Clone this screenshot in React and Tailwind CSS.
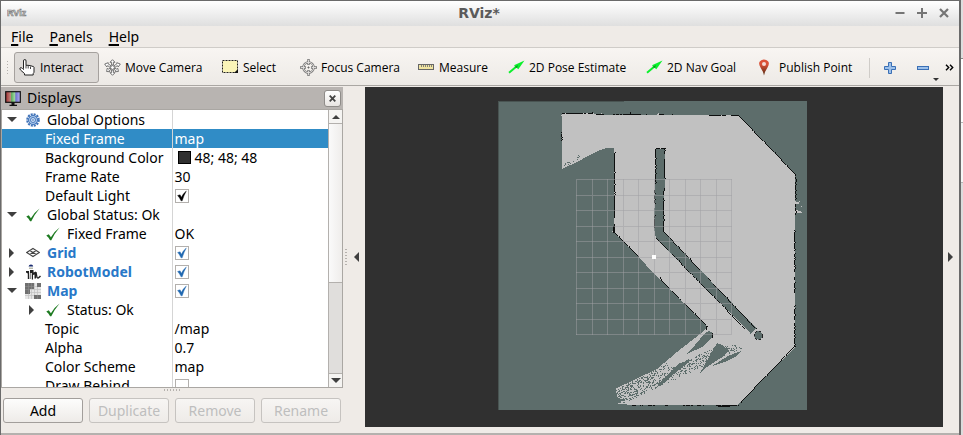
import React from 'react';

/* ---------- small drawings ---------- */

const HandIcon = () => (
  <svg width="17" height="17" viewBox="0 0 17 17" className="shrink-0">
    <path
      d="M4.500 9.500V2q0-1.500 1.300-1.500T7 2v4.500q1-.8 2 0 1-.6 2 .3 1-.5 2 .5 1.500-.3 2 .8v5.200l-.8 1.300v1.400H5.500V14.500L1.500 11q-1-1.300-.5-2 1-1 2.500.5l1 1z"
      fill="#fff" stroke="#222" strokeWidth="1"
    />
    <path d="M7 6.500v3M9.200 7v2.500M11.500 7.500v2.500" stroke="#444" strokeWidth="1" />
  </svg>
);

const MoveIcon = () => (
  <svg width="17" height="17" viewBox="0 0 17 17" className="shrink-0" fill="#fff" stroke="#666" strokeWidth="0.900" strokeLinejoin="round">
    <path d="M8.500 .7L11 3.300H9.400V6H7.600V3.300H6z" />
    <path d="M8.500 16.300L6 13.700h1.600V11h1.800v2.700H11z" />
    <path d="M.7 5L4.200 3.700v1.200L7.300 7 6.200 8.400 3.600 6.600 2.800 8z" />
    <path d="M16.300 5l-3.500-1.300v1.200L9.700 7l1.100 1.400 2.600-1.800.8 1.400z" />
    <path d="M2.600 12.500l.6-3.200 1 .9 2-1.200.9 1.300-2 1.300.7 1.100z" />
    <path d="M14.400 12.500l-.6-3.200-1 .9-2-1.200-.9 1.300 2 1.300-.7 1.100z" />
    <circle cx="8.500" cy="8.500" r="1.900" />
  </svg>
);

const SelectIcon = () => (
  <svg width="17" height="17" viewBox="0 0 17 17" className="shrink-0">
    <rect x="0.500" y="1.500" width="15" height="12" fill="#fbf5b8" stroke="#222" strokeDasharray="2 1" />
    <path d="M16 10v4h-4z" fill="#111" />
  </svg>
);

const FocusIcon = () => (
  <svg width="17" height="17" viewBox="0 0 17 17" className="shrink-0" fill="none" stroke="#777">
    <circle cx="8.500" cy="8.500" r="5.200" strokeWidth="2.200" />
    <path d="M8.500 0v6M8.500 11v6M0 8.500h6M11 8.500h6" strokeWidth="2.400" />
    <circle cx="8.500" cy="8.500" r="5.200" stroke="#e4e2e0" strokeWidth="0.900" />
    <path d="M8.500 .8v4.500M8.500 11.700v4.500M.8 8.500h4.500M11.700 8.500h4.500" stroke="#e4e2e0" strokeWidth="0.900" />
    <path d="M7.500 8.500h2M8.500 7.500v2" stroke="#666" />
  </svg>
);

const RulerIcon = () => (
  <svg width="17" height="17" viewBox="0 0 17 17" className="shrink-0">
    <rect x="0.500" y="5.500" width="15" height="5" fill="#f0e4a0" stroke="#666" />
    <path d="M3.500 6v2M5.500 6v2M7.500 6v2M9.500 6v2M11.500 6v2M13.500 6v2" stroke="#777" strokeWidth="0.900" />
  </svg>
);

const ArrowIcon = () => (
  <svg width="17" height="17" viewBox="0 0 17 17" className="shrink-0">
    <path d="M1 13.700L9 7" stroke="#0cf02c" strokeWidth="2" />
    <path d="M16.500 1.500L6 6.300 10.300 10.300z" fill="#0cf02c" />
    <path d="M6.500 8L10 6l-1 3z" fill="#0a9a22" />
  </svg>
);

const PinIcon = () => (
  <svg width="17" height="17" viewBox="0 0 17 17" className="shrink-0">
    <defs>
      <linearGradient id="pin" x1="0" y1="0" x2="0" y2="1">
        <stop offset="0.300" stopColor="#db5238" />
        <stop offset="1" stopColor="#50280f" />
      </linearGradient>
    </defs>
    <path d="M6 16.500Q5.500 13 2.500 8.500 0 4.500 2 2.200 3.500 .5 6 .5t4 1.700q2 2.300-.5 6.300Q6.500 13 6 16.500z" fill="url(#pin)" />
    <circle cx="6" cy="5" r="2" fill="#f4dcd6" />
  </svg>
);

const PlusIcon = () => (
  <svg width="14" height="14" viewBox="0 0 14 14">
    <path d="M5.500 1.500h3v4h4v3h-4v4h-3v-4h-4v-3h4z" fill="#9cc0ea" stroke="#3a6fb5" />
  </svg>
);

const MinusIcon = () => (
  <svg width="14" height="14" viewBox="0 0 14 14">
    <rect x="1.500" y="5.500" width="11" height="3" fill="#9cc0ea" stroke="#3a6fb5" />
  </svg>
);

const MonitorIcon = () => (
  <svg width="16" height="17" viewBox="0 0 16 17" className="shrink-0">
    <defs>
      <linearGradient id="screen">
        <stop offset="0.050" stopColor="#a83c3c" />
        <stop offset="0.350" stopColor="#c08a80" />
        <stop offset="0.400" stopColor="#5fae62" />
        <stop offset="0.600" stopColor="#9ad69a" />
        <stop offset="0.700" stopColor="#7272d0" />
        <stop offset="1" stopColor="#b8b8f4" />
      </linearGradient>
    </defs>
    <rect x="0.700" y="1.700" width="14.600" height="10.600" fill="url(#screen)" stroke="#111" strokeWidth="1.200" />
    <path d="M6.500 12.500h3v2.200H12V16H4.500v-1.300h2z" fill="#111" />
  </svg>
);

const GearIcon = () => (
  <svg width="14" height="14" viewBox="0 0 14 14" className="shrink-0">
    <circle cx="7" cy="7" r="5.700" fill="none" stroke="#3f72b8" strokeWidth="2.200" strokeDasharray="2 0.980" />
    <circle cx="7" cy="7" r="4.500" fill="#a9c7ea" stroke="#3f72b8" />
    <circle cx="7" cy="7" r="2.500" fill="#cfe0f4" stroke="#3f72b8" strokeWidth="0.900" />
    <circle cx="7" cy="7" r="0.800" fill="#3a6cb0" />
  </svg>
);

const OkIcon = () => (
  <svg width="14" height="14" viewBox="0 0 14 14" className="shrink-0">
    <path d="M.3 8.500l2.500-1.300L4.900 10.300Q8.500 4 13.600 .4 8.300 6.500 5.300 13.300H4.100Q2.500 10 .3 8.500z" fill="#1d7a20" />
  </svg>
);

const GridIcon = () => (
  <svg width="14" height="14" viewBox="0 0 14 14" className="shrink-0" fill="none" stroke="#444" strokeWidth="1.100">
    <path d="M7 2.500L13.300 6.500 7 10.500.7 6.500zM3.800 4.500l6.400 4M10.200 4.500l-6.400 4" />
  </svg>
);

const RobotIcon = () => (
  <svg width="16" height="16" viewBox="0 0 16 16" className="shrink-0">
    <path d="M3.500 2.500Q4 .5 6 .5t2.200 2z" fill="#1a2c70" />
    <path d="M4 3.500h4v1.500H4z" fill="#b9bcae" />
    <path d="M1 7h3v8H2.800V9.500L1 8.500zM5 6h3.500v2.500L11 7.500v7H9.500v-4L8 11v4.500H6.800V9H5.500v6H4.700z" fill="#222" />
    <path d="M11 8l1 5.500q1 1.500 3.500-1.500" fill="none" stroke="#222" strokeWidth="1.300" />
  </svg>
);

const MapIcon = () => (
  <svg width="16" height="16" viewBox="0 0 16 16" className="shrink-0">
    <rect width="16" height="16" fill="#e6e6e6" />
    <path d="M3.500 0v16M6.500 0v16M9.500 0v16M12.500 0v16M0 3.500h16M0 6.500h16M0 9.500h16M0 12.500h16" stroke="#c0c0c0" strokeWidth="0.700" />
    <path d="M0 0h9v6H5v5H0zM12 0h4v4h-4zM9 12h7v4H9z" fill="#707070" />
    <path d="M3.500 0v11M6.500 0v6M0 3.500h9M0 6.500h5M12.500 12v4" stroke="#8e8e8e" strokeWidth="0.600" />
  </svg>
);

const Triangle = ({ dir }) => {
  const d = { down: 'M0 2h10L5 7z', right: 'M2 0v10l5-5z', left: 'M8 0v10L3 5z', up: 'M1 7h8L5 3z' }[dir];
  return (
    <svg width="10" height="10" viewBox="0 0 10 10" className="shrink-0">
      <path d={d} fill="#3f3f3f" />
    </svg>
  );
};

/* ---------- toolbar ---------- */

const tools = [
  { label: 'Interact', icon: <HandIcon />, width: 'w-[85px]', active: true },
  { label: 'Move Camera', icon: <MoveIcon />, width: 'w-[118px]' },
  { label: 'Select', icon: <SelectIcon />, width: 'w-[78px]' },
  { label: 'Focus Camera', icon: <FocusIcon />, width: 'w-[118px]' },
  { label: 'Measure', icon: <RulerIcon />, width: 'w-[90px]' },
  { label: '2D Pose Estimate', icon: <ArrowIcon />, width: 'w-[138px]' },
  { label: '2D Nav Goal', icon: <ArrowIcon />, width: 'w-[112px]' },
  { label: 'Publish Point', icon: <PinIcon />, width: 'w-[112px]' },
];

function Toolbar() {
  return (
    <div className="flex h-[39px] shrink-0 items-center overflow-hidden border-t border-b border-t-[#cfccc8] border-b-[#aaa7a3] bg-linear-to-b from-[#f8f5f2] to-[#edeae6] pt-[2px] pl-[5px]">
      <div className="mr-1 h-4 w-1 shrink-0 bg-[radial-gradient(#b5b1ad_1px,transparent_1px)] bg-[size:3px_3px]" />
      {tools.map((t) => (
        <button
          key={t.label}
          type="button"
          className={`${t.width} ${t.active ? 'border-[#a5a19e] bg-[#dddad7]' : 'border-transparent'} flex h-[31px] shrink-0 items-center gap-1 rounded-[3px] border pl-1 font-['Open_Sans',sans-serif] text-xs whitespace-nowrap text-black`}
        >
          {t.icon}
          {t.label}
        </button>
      ))}
      <div className="mr-2 ml-1 h-5 w-px shrink-0 bg-[#cfccc8]" />
      <button type="button" aria-label="Add tool" className="flex h-7 w-6 shrink-0 items-center justify-center">
        <PlusIcon />
      </button>
      <button type="button" aria-label="Remove tool" className="relative ml-[9px] flex h-7 w-6 shrink-0 items-center justify-center">
        <MinusIcon />
        <svg width="6" height="3" viewBox="0 0 6 3" className="absolute -right-1 bottom-px">
          <path d="M0 0h6L3 3z" fill="#333" />
        </svg>
      </button>
      <button type="button" aria-label="More tools" className="ml-auto flex h-7 w-5 shrink-0 items-center justify-center">
        <svg width="9" height="7" viewBox="0 0 9 7" fill="none" stroke="#000" strokeWidth="1.400">
          <path d="M1 .8l2.700 2.700L1 6.200M5 .8l2.700 2.700L5 6.200" />
        </svg>
      </button>
    </div>
  );
}

/* ---------- displays panel ---------- */

const rows = [
  { name: 'Global Options', arrow: 'down', icon: <GearIcon /> },
  { name: 'Fixed Frame', value: 'map', selected: true },
  { name: 'Background Color', value: '48; 48; 48', swatch: true },
  { name: 'Frame Rate', value: '30' },
  { name: 'Default Light', check: 'black' },
  { name: 'Global Status: Ok', arrow: 'down', icon: <OkIcon /> },
  { name: 'Fixed Frame', value: 'OK', nested: true, icon: <OkIcon /> },
  { name: 'Grid', arrow: 'right', icon: <GridIcon />, check: 'blue', bold: true },
  { name: 'RobotModel', arrow: 'right', icon: <RobotIcon />, check: 'blue', bold: true },
  { name: 'Map', arrow: 'down', icon: <MapIcon />, check: 'blue', bold: true },
  { name: 'Status: Ok', arrow: 'right', nested: true, icon: <OkIcon /> },
  { name: 'Topic', value: '/map' },
  { name: 'Alpha', value: '0.7' },
  { name: 'Color Scheme', value: 'map' },
  { name: 'Draw Behind', check: 'none' },
];

function Check({ kind, label }) {
  return (
    <span className="relative block size-[14px]">
      <input
        type="checkbox"
        aria-label={label}
        defaultChecked={kind !== 'none'}
        className="peer block size-[14px] appearance-none border border-[#b3b0ad] bg-white"
      />
      <svg
        viewBox="0 0 14 14"
        className={`${kind === 'blue' ? 'text-[#2068b0]' : 'text-black'} pointer-events-none absolute inset-0 hidden size-[14px] peer-checked:block`}
      >
        <path d="M2.600 6.500l2.500-.7 1.200 2.500Q8.300 4.300 11.300 2 8.800 6.500 7.200 11.800H6Q4.600 8.500 2.600 6.500z" fill="currentColor" stroke="currentColor" strokeWidth="0.400" />
      </svg>
    </span>
  );
}

function Row({ row }) {
  const plain = !row.icon;
  return (
    <tr className={row.selected ? 'bg-[#308cc6] text-white' : ''}>
      <td className="h-[19px] border-r border-[#d5d5d5] p-0">
        <div className={`${row.nested ? 'pl-[25px]' : 'pl-[5px]'} flex h-[19px] items-center whitespace-nowrap`}>
          {plain ? (
            <span className="w-[38px]" />
          ) : (
            <>
              <span className="flex w-4 shrink-0 items-center">{row.arrow && <Triangle dir={row.arrow} />}</span>
              <span className="mr-1 flex w-5 shrink-0 items-center justify-center">{row.icon}</span>
            </>
          )}
          <span className={row.bold ? 'font-bold text-[#2878c8]' : ''}>{row.name}</span>
        </div>
      </td>
      <td className="p-0 pl-[2px]">
        <div className="flex h-[19px] items-center">
          {row.swatch && <span className="mr-1 ml-[3px] size-[13px] border border-black bg-[#303030]" />}
          {row.check && <Check kind={row.check} label={row.name} />}
          {row.value}
        </div>
      </td>
    </tr>
  );
}

const actions = [
  { label: 'Add' },
  { label: 'Duplicate', disabled: true },
  { label: 'Remove', disabled: true },
  { label: 'Rename', disabled: true },
];

function DisplaysPanel() {
  return (
    <section className="flex w-[342px] shrink-0 flex-col text-sm">
      <header className="flex h-[22px] shrink-0 items-center bg-[#b8b4b1] pr-[2px] pl-1">
        <MonitorIcon />
        <h2 className="ml-[6px] flex-1">Displays</h2>
        <button
          type="button"
          aria-label="Close"
          className="flex size-[17px] items-center justify-center rounded-[3px] border border-[#8f8c89] bg-linear-to-b from-white to-[#e8e5e2]"
        >
          <svg width="7" height="7" viewBox="0 0 7 7" stroke="#444" strokeWidth="1.800">
            <path d="M.7 .7l5.600 5.600M6.300 .7L.7 6.300" />
          </svg>
        </button>
      </header>
      <div className="flex min-h-0 flex-1 overflow-hidden border border-[#aaa7a3] bg-white">
        <div className="min-w-0 flex-1 overflow-hidden">
          <table className="w-full table-fixed border-collapse leading-[19px]">
            <colgroup>
              <col className="w-[170px]" />
              <col />
            </colgroup>
            <tbody>
              {rows.map((r, i) => (
                <Row key={i} row={r} />
              ))}
            </tbody>
          </table>
        </div>
        <div className="flex w-[14px] shrink-0 flex-col border-l border-[#b3b0ad] bg-[#e0dedc]">
          <div className="flex h-[14px] shrink-0 items-center justify-center border-b border-[#b3b0ad] bg-[#f5f4f2]">
            <Triangle dir="up" />
          </div>
          <div className="basis-[159px] border-b border-[#b3b0ad] bg-linear-to-r from-[#fafafa] to-[#efedeb]" />
          <div className="flex-1" />
          <div className="flex h-[14px] shrink-0 items-center justify-center border-t border-[#b3b0ad] bg-[#f5f4f2]">
            <Triangle dir="down" />
          </div>
        </div>
      </div>
      <div className="flex h-[10px] shrink-0 justify-center pt-px">
        <div className="h-[2px] w-4 bg-[repeating-linear-gradient(90deg,#b5b1ad_0_1px,transparent_1px_3px)]" />
      </div>
      <div className="grid shrink-0 grid-cols-4 gap-[6px] pr-[2px] pb-[10px] pl-[2px]">
        {actions.map((a) => (
          <button
            key={a.label}
            type="button"
            disabled={a.disabled}
            className="h-[25px] rounded-[3px] border border-[#a29e9b] bg-linear-to-b from-[#fdfdfc] to-[#eeebe8] leading-5 text-black disabled:border-[#c6c3c0] disabled:from-[#f7f5f3] disabled:text-[#bebebe]"
          >
            {a.label}
          </button>
        ))}
      </div>
    </section>
  );
}

/* ---------- occupancy map ---------- */

function makeRandom(seed) {
  let s = seed;
  return () => {
    s = (s * 1664525 + 1013904223) % 4294967296;
    return s / 4294967296;
  };
}

function upperEdge(x) {
  if (x < 657) return 389 - ((x - 615) * 20) / 42;
  if (x < 677) return 369 - ((x - 657) * 17) / 20;
  return 352 - ((x - 677) * 21) / 27;
}

/* unknown cells scattered over the fan of sparse laser hits */
function scatter() {
  const rnd = makeRandom(11);
  let d = '';
  for (let x = 614; x < 742; x++) {
    for (let y = 345; y < 405; y++) {
      const r = rnd();
      const low = 404 - (x - 622) * 0.47;
      if (y < upperEdge(x) || y > low) continue;
      const depth = (low - y) / 14;
      const dens = x < 640 ? 0.46 : x < 662 ? 0.34 : x < 700 ? 0.2 : 0.18;
      const near = x > 668 ? (y > low - 14 ? 1.3 : 0) : Math.min(1, 0.5 + depth);
      if (r < dens * near) d += `M${x} ${y}h1v1h-1z`;
    }
  }
  for (let i = 0; i < 14; i++) {
    const x = Math.floor(rnd() * 18);
    d += `M${563 + x} ${166 - Math.floor(x / 2) - Math.floor(rnd() * 5)}h1v1h-1z`;
  }
  return d;
}

/* occupied cells left along a wall, with gaps where the scan missed */
function wall(x1, y1, x2, y2, seed, fill) {
  const rnd = makeRandom(seed);
  const n = Math.round(Math.max(Math.abs(x2 - x1), Math.abs(y2 - y1)));
  let d = '';
  let on = true;
  for (let i = 0; i <= n; i++) {
    if (rnd() < 0.3) on = rnd() < fill;
    if (!on) continue;
    const x = Math.round(x1 + ((x2 - x1) * i) / n + (rnd() < 0.12 ? 1 : 0));
    const y = Math.round(y1 + ((y2 - y1) * i) / n);
    d += `M${x} ${y}h1v1h-1z`;
  }
  return d;
}

const walls = [
  [562, 113, 592, 113, 3, 0.75],
  [596, 114, 646, 114, 5, 0.75],
  [654, 114, 672, 114, 6, 0.8],
  [704, 115, 738, 115, 7, 0.85],
  [738, 115, 795, 174, 8, 1],
  [795, 174, 795, 214, 9, 0.85],
  [794, 230, 794, 347, 10, 0.75],
  [794, 346, 740, 402, 12, 1],
  [630, 405, 716, 405, 13, 0.4],
  [716, 405, 737, 405, 23, 1],
  [718, 406, 737, 406, 24, 0.8],
  [561, 132, 561, 148, 14, 0.6],
  [614, 152, 614, 232, 15, 0.9],
  [613, 222, 613, 232, 30, 0.8],
  [615, 233, 707, 326, 16, 0.8],
  [655, 149, 655, 183, 17, 1],
  [654, 184, 654, 228, 29, 0.55],
  [656, 148, 665, 148, 18, 1],
  [664, 149, 663, 232, 19, 0.85],
  [656, 238, 750, 334, 20, 0.9],
  [664, 232, 755, 328, 21, 0.9],
].map((w) => wall(...w));

const noise = scatter();
const gridLines = Array.from({ length: 11 }, (_, i) => Math.round(i * 15.5));

function MapView() {
  return (
    <svg
      viewBox="365 87 578 340"
      className="block size-full"
      shapeRendering="crispEdges"
      role="img"
      aria-label="Map view"
    >
      <rect x="498" y="101" width="309" height="309" fill="#5d6d6b" />
      <path d="M498.500 410V101.500H624" fill="none" stroke="#495452" />
      <path
        fill="#c1c1c1"
        d="M560 116L563 113H591L593 111 594 114H600L602 112 603 115H656L658 113 660 115H738L795 174V201L800 203 795 205V209L803 213 795 213V347L738 405H630L618 403 626 400 618 398 615 389 657 369 677 352 704 331 707 327 670 290 646 265 614 232V148H606L600 150 590 155 577 162 562 169V116z"
      />
      <path
        fill="#5d6d6b"
        d="M656 149H665L664 232 756 328 751 334 656 238 654 228zM709 331L713 333V337L702 347 687 354 695 345 705 333zM717 343L722 345 729 350 725 355 707 367 700 373zM690 360L680 363 670 372 660 382 656 388 664 383 674 374 684 366zM741 351L728 356 712 366 727 361 735 357z"
      />
      <circle cx="758.500" cy="335.500" r="4.200" fill="#5d6d6b" stroke="#222" strokeDasharray="2 2" />
      <path d={noise} fill="#5d6d6b" />
      <g fill="#c1c1c1">
        <path d="M618 403h5v1h-5zM621 401h3v1h-3zM801 206h1v1h-1zM799 201h1v1h-1zM797 211h4v1h-4zM612 231h2v1h-2z" />
      </g>
      {walls.map((d, i) => (
        <path key={i} d={d} fill="#0d0f0f" />
      ))}
      <path d="M712 333h1v5h-1zM706 326h1v4h-1zM592 112h1v2h-1zM630 112h1v3h-1z" fill="#0d0f0f" />
      <g stroke="#a0a0a4" strokeOpacity="0.500">
        {gridLines.map((o) => (
          <path key={o} d={`M${576.5 + o} 179V335M576 ${179.5 + o}H732`} />
        ))}
      </g>
      <rect x="652" y="255" width="4" height="4" fill="#fff" />
    </svg>
  );
}

/* ---------- window ---------- */

function SideHandle({ dir }) {
  return (
    <button
      type="button"
      aria-label={dir === 'left' ? 'Collapse left panels' : 'Expand right panels'}
      className={`${dir === 'left' ? 'w-[22px] pr-1' : 'w-4 pr-[3px]'} flex shrink-0 items-center justify-end gap-1 pb-[6px]`}
    >
      {dir === 'left' && (
        <span className="h-4 w-[2px] bg-[repeating-linear-gradient(180deg,#b5b1ad_0_1px,transparent_1px_3px)]" />
      )}
      <Triangle dir={dir} />
    </button>
  );
}

export default function App() {
  return (
    <div className="flex h-screen font-['Noto_Sans',sans-serif] text-black">
      <div className="flex min-w-0 flex-1 flex-col border-t border-r-2 border-l border-[#6a6a6a] bg-[#efebe7]">
        <div className="grid h-[25px] shrink-0 grid-cols-[1fr_auto_1fr] items-center bg-linear-to-b from-white to-[#dfdfdf] pr-2 pb-px pl-[6px]">
          <svg width="20" height="14" viewBox="0 0 20 14" aria-hidden="true">
            <text x="0" y="10" fontFamily="Liberation Sans, sans-serif" fontSize="9" fontWeight="bold" fill="#fff" stroke="#777" strokeWidth="0.700">
              RViz
            </text>
          </svg>
          <h1 className="font-['DejaVu_Sans',sans-serif] text-sm leading-5 font-bold text-[#5a5a5a]">RViz*</h1>
          <div className="flex justify-end gap-2 text-[#757575]">
            <button type="button" aria-label="Minimize" className="flex size-[14px] items-center justify-center">
              <svg width="10" height="10" viewBox="0 0 10 10"><path d="M.5 5h9" stroke="currentColor" strokeWidth="2" /></svg>
            </button>
            <button type="button" aria-label="Maximize" className="flex size-[14px] items-center justify-center">
              <svg width="10" height="10" viewBox="0 0 10 10"><path d="M0 5h10M5 0v10" stroke="currentColor" strokeWidth="2" /></svg>
            </button>
            <button type="button" aria-label="Close window" className="flex size-[14px] items-center justify-center">
              <svg width="10" height="10" viewBox="0 0 10 10"><path d="M1 1l8 8M9 1L1 9" stroke="currentColor" strokeWidth="2.200" /></svg>
            </button>
          </div>
        </div>

        <nav className="flex h-[21px] shrink-0 items-center gap-4 pl-[10px] text-sm leading-5">
          {['File', 'Panels', 'Help'].map((m) => (
            <button key={m} type="button">
              <span className="underline decoration-2 underline-offset-2">{m[0]}</span>
              {m.slice(1)}
            </button>
          ))}
        </nav>

        <Toolbar />

        <main className="flex min-h-0 flex-1 pt-px">
          <DisplaysPanel />
          <SideHandle dir="left" />
          <div className="mb-[6px] min-w-0 flex-1 bg-[#303030]">
            <MapView />
          </div>
          <SideHandle dir="right" />
        </main>

        <footer className="h-[2px] shrink-0 bg-[#b4b1ae]" />
      </div>

      <div className="flex w-[2px] shrink-0 flex-col bg-[#dcdcdc]">
        <div className="h-[59px] border-b border-[#888] bg-[#dedede]" />
        <div className="h-16 border-b border-[#b5b5b5] bg-white" />
        <div className="h-[60px] border-b border-[#b5b5b5] bg-[#f6f6f6]" />
      </div>
    </div>
  );
}
